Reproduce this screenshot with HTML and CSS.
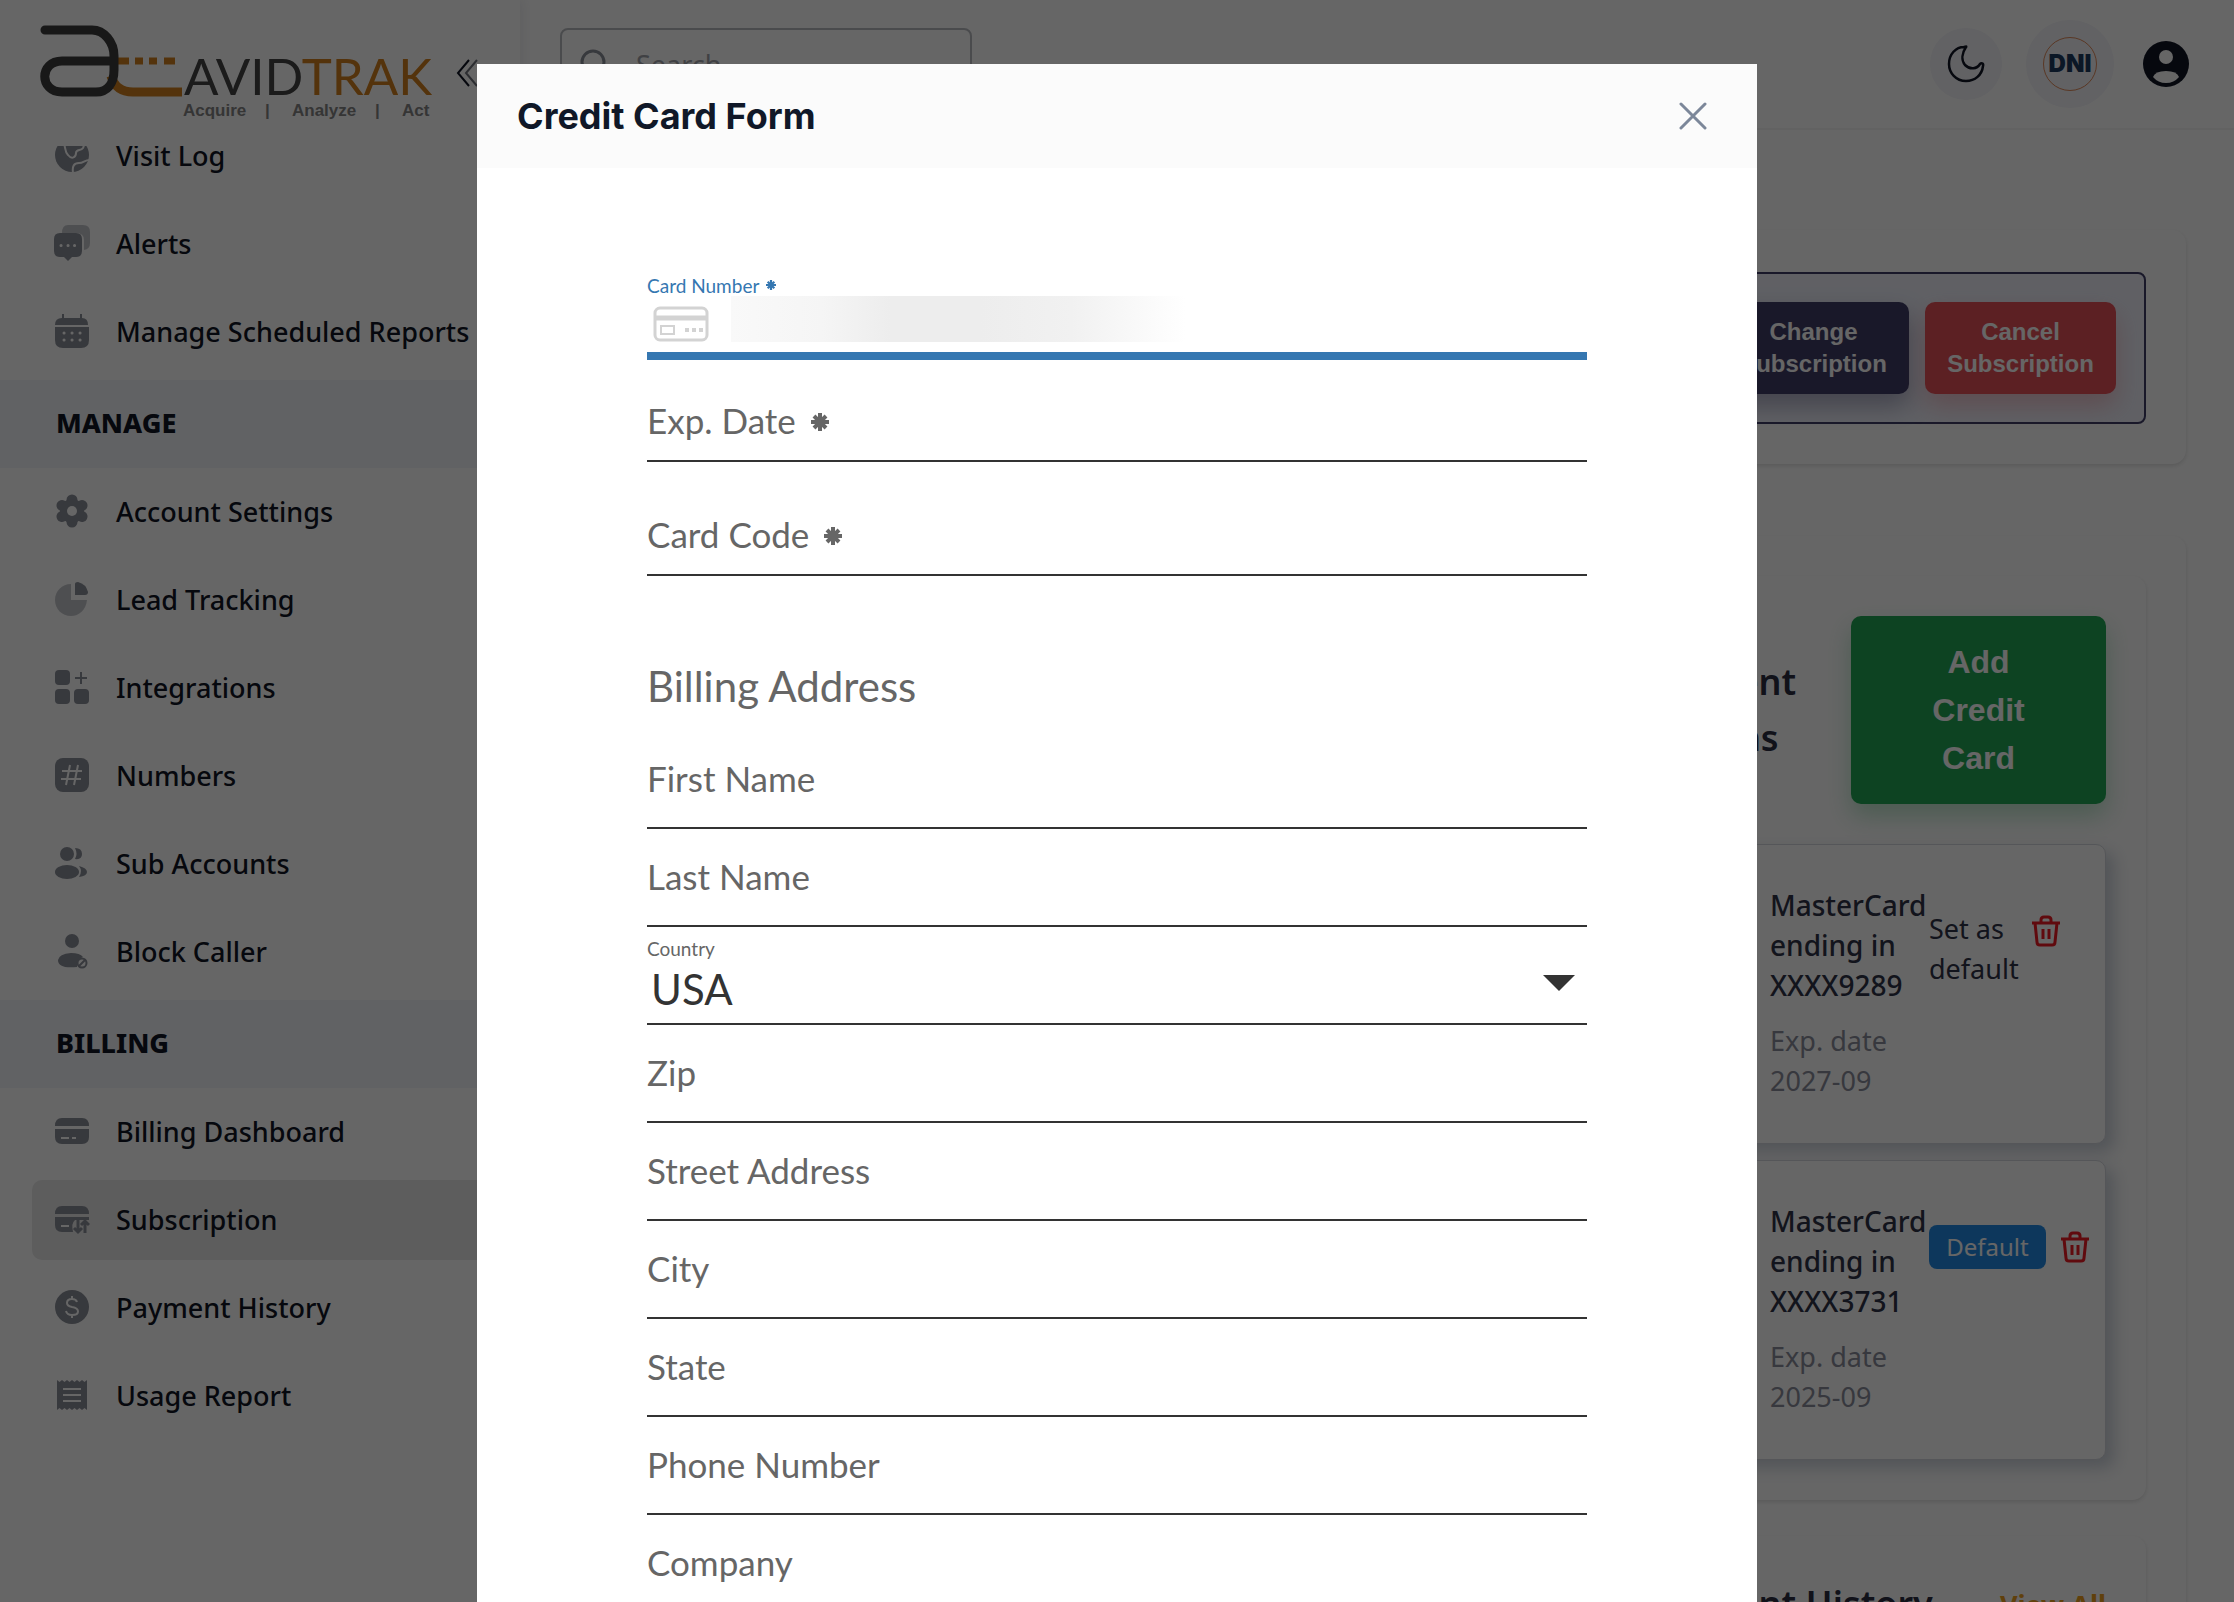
FILE: index.html
```html
<!DOCTYPE html>
<html lang="en">
<head>
    <meta charset="UTF-8">
    <meta name="viewport" content="width=device-width, initial-scale=1.0">
    <title>AvidTrak - Subscription</title>
    <link rel="stylesheet" href="styles.css">
</head>
<body>
    <div class="app">
        <aside class="sidebar">
            <div class="brand">
                <svg class="logo" viewBox="0 0 400 104" role="img" aria-label="AvidTrak">
                    <g fill="none" stroke-width="9" stroke-linecap="round">
                        <path d="M79 39H93" stroke="#d2811e" stroke-width="7" stroke-linecap="butt"/>
                        <path d="M99 39h8M113 39h8M128 39h11" stroke="#d2811e" stroke-width="7" stroke-linecap="butt"/>
                        <path d="M75 54C78 64 85 70 97 70H146" stroke="#d2811e" stroke-linecap="butt"/>
                        <path d="M9 8H56C68 8 78 20 78 34V48C78 62 71 70 60 70H26C3 70 3 39 26 39H76" stroke="#3c3c3c"/>
                    </g>
                    <text class="logo-name" x="148" y="73" fill="#444">AVID<tspan fill="#d2811e">TRAK</tspan></text>
                    <g class="logo-tag" fill="#858585">
                        <text x="147" y="94">Acquire</text>
                        <text x="229" y="94">|</text>
                        <text x="256" y="94">Analyze</text>
                        <text x="339" y="94">|</text>
                        <text x="366" y="94">Act</text>
                    </g>
                </svg>
                <button class="collapse" type="button" aria-label="Collapse menu">
                    <svg width="24" height="28" viewBox="0 0 24 28" fill="none" stroke="#0f1424" stroke-width="2">
                        <path d="M13 1L2 14L13 27"/>
                        <path d="M21 1L10 14L21 27" opacity=".6"/>
                    </svg>
                </button>
            </div>
            <nav class="menu">
                <ul class="scrolled">
                    <li><a href="#">
                        <svg class="icon" viewBox="0 0 36 36"><circle cx="18" cy="18" r="17"/><path class="cut thin" d="M9 5C12 9 10 14 14 18C18 23 22 20 22 16C22 12 27 14 29 11C30 9 30 7 32 7M19 36C18 29 20 26 25 26C30 26 30 23 36 23"/></svg>
                        Visit Log</a></li>
                    <li><a href="#">
                        <svg class="icon" viewBox="0 0 36 36"><path opacity=".5" d="M14 0H29Q36 0 36 7V18Q36 24 30 25V15Q30 8 22 8H8Q8 0 14 0Z"/><path d="M6 8H22Q28 8 28 14V26Q28 32 22 32H18L14 36L10 32H6Q0 32 0 26V14Q0 8 6 8Z"/><path class="cut" stroke-linecap="round" d="M7 20.5h.1M14 20.5h.1M20.500 20.500h.1"/></svg>
                        Alerts</a></li>
                    <li><a href="#">
                        <svg class="icon" viewBox="0 0 36 36"><path d="M8 1h2v4h16V1h2v4Q34 5 34 12H1Q1 5 8 5ZM1 14H35V27Q35 35 27 35H9Q1 35 1 27Z"/><path class="cut" stroke-linecap="round" d="M10 20h.1M18 20h.1M26 20h.1M10 27h.1M18 27h.1M26 27h.1"/></svg>
                        Manage Scheduled Reports</a></li>
                    <li class="section">MANAGE</li>
                    <li><a href="#">
                        <svg class="icon" viewBox="0 0 36 36"><g stroke="#8a8e98" stroke-width="11" stroke-linecap="round"><path d="M18 7V29M8 12.500L28 23.500M28 12.500L8 23.500"/></g><circle cx="18" cy="18" r="12"/><circle cx="18" cy="18" r="5" fill="#fff"/></svg>
                        Account Settings</a></li>
                    <li><a href="#">
                        <svg class="icon" viewBox="0 0 36 36"><path opacity=".5" d="M17 3V19H33C32 29 25 35 17 35C8 35 1 28 1 19C1 10 8 3 17 3Z"/><path d="M21 3Q21 1 24 1Q32 3 34 11Q34 14 31 14H21Z"/></svg>
                        Lead Tracking</a></li>
                    <li><a href="#">
                        <svg class="icon" viewBox="0 0 36 36"><rect x="1" y="1" width="15" height="15" rx="4"/><rect x="1" y="20" width="15" height="15" rx="4"/><rect x="20" y="20" width="15" height="15" rx="4"/><path fill="none" stroke="#8a8e98" stroke-width="2" d="M21 9H33M27 3V15"/></svg>
                        Integrations</a></li>
                    <li><a href="#">
                        <svg class="icon" viewBox="0 0 36 36"><rect x="1" y="1" width="34" height="34" rx="8"/><path class="cut thin" d="M8 14H28M7 22H27M16 8L12 28M24 8L20 28"/></svg>
                        Numbers</a></li>
                    <li><a href="#">
                        <svg class="icon" viewBox="0 0 36 36"><circle cx="13" cy="9" r="7"/><ellipse cx="13" cy="27" rx="12" ry="7"/><path d="M21 3Q28 3 28 9Q28 15 21 14Q24 9 21 3ZM25 21Q33 23 33 27Q33 31 25 32Q29 26 25 21Z"/></svg>
                        Sub Accounts</a></li>
                    <li><a href="#">
                        <svg class="icon" viewBox="0 0 36 36"><circle cx="18" cy="8" r="7"/><path d="M17 20Q26 20 29 24Q22 26 23 34Q4 36 4 27Q5 21 17 20Z"/><circle cx="28" cy="30" r="4.500" fill="none" stroke="#8a8e98" stroke-width="2"/><path stroke="#8a8e98" stroke-width="2" d="M25 33L31 27"/></svg>
                        Block Caller</a></li>
                    <li class="section">BILLING</li>
                    <li><a href="#">
                        <svg class="icon" viewBox="0 0 36 36"><path d="M8 5H28Q35 5 35 13H1Q1 5 8 5ZM1 16H35V24Q35 31 28 31H8Q1 31 1 24Z"/><path class="cut thin" d="M7 25H15M18 25H22"/></svg>
                        Billing Dashboard</a></li>
                    <li class="active"><a href="#">
                        <svg class="icon" viewBox="0 0 36 36"><path d="M8 5H28Q35 5 35 13H1Q1 5 8 5ZM1 16H35V19H21Q17 22 19 31H8Q1 31 1 24Z"/><path class="cut thin" d="M7 25H15"/><path fill="none" stroke="#8a8e98" stroke-width="3" d="M24 19V31M20 27L24 31L28 27M31 32V20M27 24L31 20L35 24"/></svg>
                        Subscription</a></li>
                    <li><a href="#">
                        <svg class="icon" viewBox="0 0 36 36"><circle cx="18" cy="18" r="17"/><path class="cut thin" d="M23 13Q22 10 18 10Q13 10 13 14Q13 17 18 18Q24 19 24 22.500Q24 26 18 26Q13 26 12 22M18 7V10M18 26V29"/></svg>
                        Payment History</a></li>
                    <li><a href="#">
                        <svg class="icon" viewBox="0 0 36 36"><path d="M3 3l2.500 2 2.500-2 2.500 2 2.500-2 2.500 2L18 3l2.500 2 2.500-2 2.500 2 2.500-2 2.500 2L33 3V33l-2.500-2-2.500 2-2.500-2-2.500 2-2.500-2L18 33l-2.500-2-2.500 2-2.500-2L8 33l-2.500-2L3 33Z"/><path class="cut thin" d="M9 12H27M9 18H27M9 24H27"/></svg>
                        Usage Report</a></li>
                </ul>
            </nav>
        </aside>

        <main class="main">
            <header class="topbar">
                <label class="search">
                    <svg width="30" height="30" viewBox="0 0 30 30" fill="none" stroke="#8a8e98" stroke-width="3"><circle cx="13" cy="13" r="11"/><path d="M21 21L28 28"/></svg>
                    <input type="search" placeholder="Search" aria-label="Search">
                </label>
                <div class="tools">
                    <button class="round" type="button" aria-label="Dark mode">
                        <svg width="38" height="38" viewBox="0 0 38 38" fill="none" stroke="#0f1424" stroke-width="2.500" stroke-linejoin="round"><path d="M19 2C15 8 14 15 18 20C23 25 30 24 33 19C34 18 37 18 36 21C35 30 28 36 19 36C9 36 2 28 2 19C2 9 9 2 17 2Q20 1 19 2Z"/></svg>
                    </button>
                    <button class="round dni" type="button"><span>DNI</span></button>
                    <button class="avatar" type="button" aria-label="Account">
                        <svg width="48" height="48" viewBox="0 0 48 48"><circle cx="24" cy="24" r="23" fill="#0f1424"/><circle cx="24" cy="17" r="7" fill="#fff"/><path d="M11 37Q13 31 24 31Q35 31 37 37Q32 43 24 43Q16 43 11 37Z" fill="#fff"/></svg>
                    </button>
                </div>
            </header>

            <section class="card">
                <div class="plan">
                    <button class="btn change" type="button">Change Subscription</button>
                    <button class="btn cancel" type="button">Cancel Subscription</button>
                </div>
            </section>

            <section class="card columns">
                <div class="panel">
                    <div class="panel-head">
                        <h2>Payment Options</h2>
                        <button class="btn add" type="button">Add Credit Card</button>
                    </div>
                    <div class="saved">
                        <div class="saved-text">
                            <p class="name">MasterCard ending in XXXX9289</p>
                            <p class="exp">Exp. date 2027-09</p>
                        </div>
                        <div class="actions">
                            <button class="link" type="button">Set as default</button>
                            <button class="trash" type="button" aria-label="Delete card">
                                <svg width="28" height="32" viewBox="0 0 28 32" fill="none" stroke="#f01b24" stroke-width="3"><path d="M0 8H28M9 8V5Q9 2 12 2H16Q19 2 19 5V8M3 8L5 27Q5 30 8 30H20Q23 30 23 27L25 8M11 14V24M17 14V24"/></svg>
                            </button>
                        </div>
                    </div>
                    <div class="saved">
                        <div class="saved-text">
                            <p class="name">MasterCard ending in XXXX3731</p>
                            <p class="exp">Exp. date 2025-09</p>
                        </div>
                        <div class="actions">
                            <span class="badge">Default</span>
                            <button class="trash" type="button" aria-label="Delete card">
                                <svg width="28" height="32" viewBox="0 0 28 32" fill="none" stroke="#f01b24" stroke-width="3"><path d="M0 8H28M9 8V5Q9 2 12 2H16Q19 2 19 5V8M3 8L5 27Q5 30 8 30H20Q23 30 23 27L25 8M11 14V24M17 14V24"/></svg>
                            </button>
                        </div>
                    </div>
                </div>
                <div class="panel">
                    <div class="panel-head">
                        <h2>Payment History</h2>
                        <a class="view-all" href="#">View All</a>
                    </div>
                </div>
            </section>
        </main>
    </div>

    <div class="overlay">
        <div class="modal" role="dialog" aria-labelledby="modal-title">
            <div class="modal-head">
                <h1 id="modal-title">Credit Card Form</h1>
                <button class="close" type="button" aria-label="Close">
                    <svg width="28" height="28" viewBox="0 0 28 28" fill="none" stroke="#7c8799" stroke-width="3" stroke-linecap="round"><path d="M2 2L26 26M26 2L2 26"/></svg>
                </button>
            </div>
            <form class="form">
                <div class="field-number">
                    <label for="number">Card Number
                        <svg class="star" viewBox="0 0 18 18"><path d="M9 0V18M0 9H18M3 3L15 15M15 3L3 15"/></svg>
                    </label>
                    <div class="number-row">
                        <svg width="56" height="36" viewBox="0 0 56 36" fill="none" stroke="#d3d3d3" stroke-width="3"><rect x="2" y="2" width="52" height="32" rx="5"/><path d="M2 12H54" stroke-width="5"/><rect x="8" y="20" width="13" height="8" stroke-width="2"/><path d="M32 24h4M39 24h4M46 24h4" stroke-width="4"/></svg>
                        <input type="text" id="number">
                    </div>
                </div>
                <div class="field required">
                    <label for="expdate">Exp. Date
                        <svg class="star" viewBox="0 0 18 18"><path d="M9 0V18M0 9H18M3 3L15 15M15 3L3 15"/></svg>
                    </label>
                    <input type="text" id="expdate">
                </div>
                <div class="field required">
                    <label for="code">Card Code
                        <svg class="star" viewBox="0 0 18 18"><path d="M9 0V18M0 9H18M3 3L15 15M15 3L3 15"/></svg>
                    </label>
                    <input type="text" id="code">
                </div>

                <h2>Billing Address</h2>
                <div class="field"><label for="first">First Name</label><input type="text" id="first"></div>
                <div class="field"><label for="last">Last Name</label><input type="text" id="last"></div>
                <div class="field country">
                    <label for="country">Country</label>
                    <select id="country"><option>USA</option></select>
                    <svg class="caret" width="32" height="16" viewBox="0 0 32 16"><path d="M0 0H32L16 16Z" fill="#333"/></svg>
                </div>
                <div class="field"><label for="zip">Zip</label><input type="text" id="zip"></div>
                <div class="field"><label for="street">Street Address</label><input type="text" id="street"></div>
                <div class="field"><label for="city">City</label><input type="text" id="city"></div>
                <div class="field"><label for="state">State</label><input type="text" id="state"></div>
                <div class="field"><label for="phone">Phone Number</label><input type="text" id="phone"></div>
                <div class="field"><label for="company">Company</label><input type="text" id="company"></div>
            </form>
        </div>
    </div>
</body>
</html>
```

FILE: styles.css
```css
* {
    box-sizing: border-box;
}
body {
    margin: 0;
    font-family: "Noto Sans", sans-serif;
    font-size: 27px;
    color: #0f1424;
    background: #fff;
}
h1, h2, p, ul {
    margin: 0;
    padding: 0;
}
button, input, select {
    font: inherit;
    color: inherit;
    border: 0;
    padding: 0;
    background: none;
    outline: none;
}
a {
    color: inherit;
    text-decoration: none;
}
.app {
    display: flex;
    height: 100vh;
    overflow: hidden;
}

/* sidebar */
.sidebar {
    display: flex;
    flex-direction: column;
    flex: 0 0 520px;
    box-shadow: 0 0 12px rgba(90, 90, 130, 0.15);
}
.brand {
    display: flex;
    flex: 0 0 146px;
    align-items: flex-start;
    padding: 22px 36px 0;
    gap: 20px;
}
.logo {
    width: 400px;
    height: 104px;
    flex: none;
}
.logo-name {
    font: 400 51px Lato, sans-serif;
}
.logo-tag {
    font: bold 17px "Liberation Sans", sans-serif;
}
.collapse {
    margin-top: 36px;
}
.menu {
    flex: 1;
    overflow: hidden;
}
.menu ul {
    list-style: none;
}
/* first entry is partly under the logo */
.scrolled {
    margin-top: -34px;
}
.menu a {
    display: flex;
    align-items: center;
    gap: 26px;
    height: 80px;
    padding: 0 0 2px 22px;
}
.menu li {
    margin-left: 32px;
    padding: 4px 0;
    font-weight: 500;
}
.menu .section {
    margin: 4px 0 0;
    padding: 3px 0 5px 56px;
    line-height: 80px;
    font-weight: 800;
    background: #f2f4fa;
}
.active a {
    background: #e8e8e8;
    border-radius: 10px;
}
.icon {
    width: 36px;
    height: 36px;
    fill: #8a8e98;
}
.cut {
    fill: none;
    stroke: #fff;
    stroke-width: 3;
}
.thin {
    stroke-width: 2;
}

/* page */
.main {
    flex: 1;
    min-width: 0;
}
.topbar {
    display: flex;
    justify-content: space-between;
    align-items: center;
    height: 130px;
    padding: 0 44px 0 40px;
    border-bottom: 2px solid #f6f6f6;
}
.search {
    display: flex;
    align-items: center;
    gap: 26px;
    width: 412px;
    height: 72px;
    padding: 0 18px;
    border: 2px solid #b9bbc0;
    border-radius: 8px;
}
.search input {
    width: 300px;
}
.search input::placeholder {
    color: #a0a3aa;
}
.tools {
    display: flex;
    align-items: center;
    gap: 24px;
}
.round {
    display: flex;
    align-items: center;
    justify-content: center;
    width: 72px;
    height: 72px;
    border-radius: 50%;
    background: #f4f4f9;
}
.dni {
    width: 88px;
    height: 88px;
}
.dni span {
    width: 54px;
    border: 1px solid #e08a5a;
    border-radius: 50%;
    font: 900 24px/52px Inter, sans-serif;
    color: #1d3a5f;
}
.avatar {
    display: flex;
    margin-left: 4px;
}
.card {
    margin: 100px 48px 0 40px;
    padding: 42px 40px 40px;
    border-radius: 14px;
    box-shadow: 0 2px 4px rgba(0, 0, 0, 0.12);
}
.plan {
    display: flex;
    justify-content: flex-end;
    gap: 16px;
    padding: 28px;
    border: 2px solid #3f3d67;
    border-radius: 8px;
    background: #eff1fb;
}
.btn {
    border-radius: 10px;
    color: #fff;
    font-family: "Liberation Sans", sans-serif;
    font-weight: bold;
}
.change, .cancel {
    width: 191px;
    height: 92px;
    font-size: 24px;
    line-height: 32px;
}
.change {
    background: #3f3d67;
    box-shadow: 0 12px 24px rgba(63, 61, 103, 0.4);
}
.cancel {
    background: #e65158;
    box-shadow: 0 12px 24px rgba(230, 81, 88, 0.3);
}
.columns {
    display: flex;
    flex-direction: column;
    align-items: flex-end;
    gap: 36px;
    margin-top: 72px;
    padding-top: 40px;
    height: 1200px;
}
.panel {
    width: 546px;
    padding: 40px;
    border-radius: 14px;
    box-shadow: 0 2px 4px rgba(0, 0, 0, 0.12);
}
.panel-head {
    display: flex;
    align-items: center;
    justify-content: space-between;
}
.panel-head h2 {
    font-size: 36px;
    line-height: 56px;
    font-weight: 600;
    color: #2b2d42;
}
.add {
    flex: 0 0 255px;
    height: 188px;
    padding: 0 72px;
    font-size: 32px;
    line-height: 48px;
    background: #22a855;
    box-shadow: 0 12px 24px rgba(34, 168, 85, 0.3);
}
.saved {
    display: flex;
    margin-top: 16px;
    padding: 40px 18px 42px 129px;
    border: 1px solid #d5d8de;
    border-radius: 10px;
    background: #fff;
    box-shadow: 8px 8px 16px rgba(90, 110, 140, 0.3);
    color: #2f3248;
}
.panel-head + .saved {
    margin-top: 40px;
}
.saved p {
    line-height: 40px;
}
.saved-text {
    flex: 0 0 159px;
}
.saved .name {
    font-size: 28px;
    font-weight: 500;
    margin-bottom: 16px;
}
.saved .exp {
    width: 130px;
    color: #8a8d9b;
}
.actions {
    display: flex;
    align-items: flex-start;
    gap: 15px;
    padding-top: 24px;
}
.link {
    width: 88px;
    line-height: 40px;
    text-align: left;
}
.trash {
    display: flex;
    align-items: center;
    height: 44px;
}
.badge {
    width: 117px;
    border-radius: 8px;
    background: #228be6;
    color: #fff;
    font-size: 24px;
    line-height: 44px;
    text-align: center;
}
.view-all {
    font-weight: 700;
    color: #f0a020;
}

/* credit card dialog */
.overlay {
    position: fixed;
    inset: 0;
    overflow: hidden;
    padding-top: 64px;
    background: rgba(0, 0, 0, 0.6);
}
.modal {
    max-width: 1280px;
    margin: 0 auto;
    background: #fff;
}
.modal-head {
    display: flex;
    align-items: center;
    justify-content: space-between;
    height: 104px;
    padding: 0 50px 0 40px;
    background: #fbfbfb;
}
.modal-head h1 {
    font: 700 36px Inter, sans-serif;
    color: #101828;
}
.close {
    display: flex;
}
.form {
    padding: 104px 170px 80px;
    font-family: Lato, sans-serif;
    color: #666;
}
.field-number {
    margin-bottom: 14px;
    border-bottom: 8px solid #3577b1;
    color: #3577b1;
    font-size: 19px;
    line-height: 28px;
}
.field-number label {
    display: block;
    height: 24px;
}
.number-row {
    display: flex;
    align-items: flex-start;
    gap: 22px;
    height: 56px;
    padding-left: 6px;
}
.number-row svg {
    margin-top: 10px;
}
/* masked digits */
.number-row input {
    width: 454px;
    height: 46px;
    background: linear-gradient(90deg, #f9f9f9, #f5f5f5 20%, #ededed 35%, #ededed 55%, #f1f1f1 75%, #fff);
}
.star {
    width: 18px;
    height: 18px;
    margin: 0 0 3px 6px;
    stroke: currentColor;
    stroke-width: 4;
}
.field-number .star {
    width: 10px;
    height: 10px;
    margin-left: 2px;
}
.field {
    display: grid;
    height: 98px;
    border-bottom: 2px solid #333;
    font-size: 35px;
    line-height: 44px;
}
.field > * {
    grid-area: 1 / 1;
    min-width: 0;
}
.field label {
    align-self: center;
    padding-bottom: 2px;
}
.required {
    height: 88px;
    padding-top: 8px;
    margin-bottom: 26px;
}
.form h2 {
    margin: 86px 0 21px;
    font-size: 42px;
    line-height: 48px;
    font-weight: 400;
}
.country label {
    align-self: start;
    font-size: 19px;
}
.country select {
    appearance: none;
    align-self: end;
    height: 68px;
    padding-left: 4px;
    font-size: 42px;
    color: #333;
}
.country .caret {
    justify-self: end;
    align-self: center;
    margin: 16px 12px 0 0;
}
```
